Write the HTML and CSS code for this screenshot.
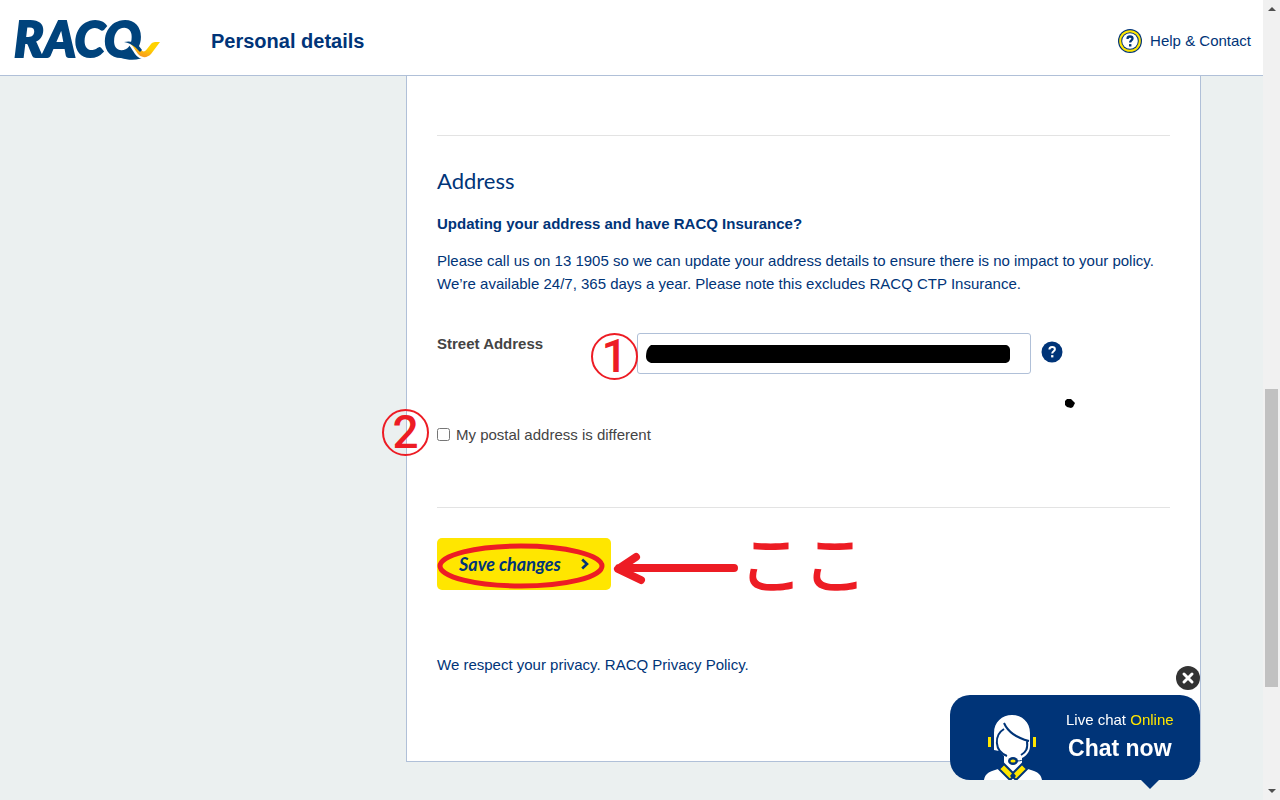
FILE: index.html
```html
<!DOCTYPE html>
<html lang="en">
<head>
    <meta charset="UTF-8">
    <meta name="viewport" content="width=device-width, initial-scale=1.0">
    <title>Personal details</title>
    <link rel="stylesheet" href="styles.css">
</head>
<body>
    <div class="page">
        <header class="header">
            <a href="#" class="logo" aria-label="RACQ">
                <svg width="149" height="42" viewBox="0 0 149 42">
                    <defs>
                        <linearGradient id="tick" x1="0.2" y1="1" x2="0.9" y2="0">
                            <stop offset="0.2" stop-color="#f9a11b"/>
                            <stop offset="0.6" stop-color="#ffd200"/>
                        </linearGradient>
                    </defs>
                    <text x="2" y="37" class="logo-text">RACQ</text>
                    <path d="M119 32h30v16h-45v-9h13z" fill="#fff"/>
                    <path d="M107 31c8 2 14-1 17-5l10 10c-5 4-16 5-25 2z" fill="#00437c"/>
                    <path d="M114 22c7-1 11 3 15 8 3 3 5 2 7-1l5-7h8l-10 14c-4 4-9 4-13 1-5-4-6-10-12-15z" fill="#fff"/>
                    <path d="M116 22c6 0 9 4 13 8 2 2 4 2 6-1l4-5c2-2 3-2 9-2l-9 12c-4 4-8 4-12 1-4-4-5-9-11-13z" fill="url(#tick)"/>
                    <path d="M112 22c9-2 14 2 18 8l-2 2c-4-4-7-8-16-10z" fill="#00437c"/>
                </svg>
            </a>
            <h1>Personal details</h1>
            <a href="#" class="help-link">
                <svg width="24" height="24" viewBox="0 0 24 24">
                    <circle cx="12" cy="12" r="12" fill="#003478"/>
                    <circle cx="12" cy="12" r="10.8" fill="#ffe600"/>
                    <circle cx="12" cy="12" r="8.8" fill="#003478"/>
                    <circle cx="12" cy="12" r="7.8" fill="#fff"/>
                    <path d="M9.6 10V9.6c0-1.4 1-2.1 2.4-2.1s2.5.8 2.5 2.1c0 2-2.4 1.7-2.4 4" fill="none" stroke="#003478" stroke-width="2.3"/>
                    <path d="M11 15.1h2.4v2.4H11z" fill="#003478"/>
                </svg>
                Help &amp; Contact
            </a>
        </header>

        <main class="main">
            <form class="card">
                <section class="address">
                    <h2>Address</h2>
                    <h3>Updating your address and have RACQ Insurance?</h3>
                    <p>Please call us on 13 1905 so we can update your address details to ensure there is no impact to your policy. We’re available 24/7, 365 days a year. Please note this excludes RACQ CTP Insurance.</p>

                    <div class="field">
                        <label for="street">Street Address</label>
                        <div class="input-wrap">
                            <input type="text" id="street">
                            <svg class="redacted" width="366" height="20" viewBox="0 0 366 20">
                                <path d="M5 1h354c3 0 5 2 5 5v8c0 3-2 5-6 5H5c-3-1-5-3-5-6 0-5 1-9 5-12z"/>
                            </svg>
                            <span class="mark mark-one">1</span>
                        </div>
                        <button type="button" class="tip" aria-label="Help">
                            <svg width="22" height="22" viewBox="0 0 22 22">
                                <circle cx="11" cy="11" r="10.5" fill="#003478"/>
                                <path d="M8.4 8.6c0-1.7 1-2.6 2.7-2.6s2.8.9 2.8 2.3c0 2.1-2.7 1.8-2.7 4.2" fill="none" stroke="#fff" stroke-width="2"/>
                                <path d="M10.1 14.1h2.3v2.3h-2.3z" fill="#fff"/>
                            </svg>
                        </button>
                        <svg class="ink-dot" width="10" height="9" viewBox="0 0 10 9"><path d="M2 0h4l2 2 2 2-1 2-1 2-2 1-4-1-2-2V2z"/></svg>
                    </div>

                    <div class="check">
                        <input type="checkbox" id="postal">
                        <label for="postal">My postal address is different</label>
                        <span class="mark mark-two">2</span>
                    </div>
                </section>

                <div class="actions">
                    <button type="submit" class="save">
                        Save changes
                        <svg width="8" height="12" viewBox="0 0 8 12"><path d="M1.2 1.5 6 6l-4.8 4.5" fill="none" stroke="#003478" stroke-width="2.6"/></svg>
                    </button>
                    <svg class="pointer" width="302" height="52" viewBox="0 0 302 52">
                        <ellipse cx="84" cy="28" rx="81" ry="20" fill="none" stroke="#ed1c24" stroke-width="5"/>
                        <path d="M297 30H182M199 19 181 31l23 11" fill="none" stroke="#ed1c24" stroke-width="8" stroke-linecap="round" stroke-linejoin="round"/>
                    </svg>
                    <span class="here" lang="ja">ここ</span>
                </div>

                <p class="privacy">We respect your privacy. <a href="#">RACQ Privacy Policy.</a></p>
            </form>
        </main>
    </div>

    <div class="scrollbar">
        <span class="arrow up"></span>
        <span class="thumb"></span>
        <span class="arrow down"></span>
    </div>

    <div class="chat">
        <button type="button" class="chat-close" aria-label="Close">
            <svg width="24" height="24" viewBox="0 0 24 24">
                <circle cx="12" cy="12" r="12" fill="#333"/>
                <path d="m8 8 8 8m0-8-8 8" stroke="#fff" stroke-width="3" stroke-linecap="round"/>
            </svg>
        </button>
        <a href="#" class="chat-box">
            <svg width="62" height="66" viewBox="0 0 62 66">
                <path d="M12 36V19C12 8 20 1 30 1s18 7 18 18v13c0 6-4 10-8 12v7l3 3 9 3c5 2 7 4 8 9H2c1-5 3-7 8-9l9-3 3-3v-9l-5-5z" fill="#fff"/>
                <path d="M22 9c4 9 13 15 25 18M22 15c-10 6-10 22 3 27M45 27c1 8-1 11-6 14" fill="none" stroke="#003478" stroke-width="2"/>
                <path d="M46 42c-2 4-7 5-12 5" fill="none" stroke="#003478" stroke-width="1"/>
                <ellipse cx="31" cy="47" rx="5" ry="4" fill="#003478"/>
                <ellipse cx="31" cy="47" rx="2.6" ry="1.6" fill="#ffe600"/>
                <path d="m17 55 5-5 9 9 9-9 5 5-11 11-3-3-3 3z" fill="#ffe600" stroke="#003478" stroke-width="2"/>
                <path d="m31 58-3 4 3 3 3-3z" fill="#003478"/>
                <path d="M6 23h3v10H6zM51 23h3v10h-3z" fill="#ffe600"/>
            </svg>
            <span class="chat-text">
                <span>Live chat <em>Online</em></span>
                <strong>Chat now</strong>
            </span>
        </a>
    </div>
</body>
</html>
```
FILE: styles.css
```css
* {
    box-sizing: border-box;
}

body {
    display: flex;
    height: 100vh;
    margin: 0;
    overflow: hidden;
    background-color: #ebf0f0;
    color: #003478;
    font-family: "Liberation Sans", Arial, sans-serif;
    font-size: 15px;
    line-height: 23px;
}

a {
    color: inherit;
    text-decoration: none;
}

button {
    padding: 0;
    border: none;
    background: none;
    cursor: pointer;
}

svg {
    display: block;
    flex: none;
}

.page {
    flex: 1;
    min-width: 0;
}

.header {
    display: flex;
    align-items: center;
    height: 76px;
    padding: 6px 12px 0 12px;
    background-color: #fff;
    border-bottom: 1px solid #b0c0d8;
}

.logo svg {
    overflow: visible;
}

.logo-text {
    font-family: Lato, sans-serif;
    font-size: 49px;
    font-weight: 900;
    font-style: italic;
    fill: #00437c;
    stroke: #00437c;
    stroke-width: 2px;
}

.header h1 {
    margin: 0 auto 0 50px;
    padding-top: 2px;
    font-size: 20px;
}

.help-link {
    display: flex;
    align-items: center;
    gap: 8px;
}

.main {
    padding: 0 62px 0 406px;
}

.card {
    padding: 59px 30px 85px;
    background-color: #fff;
    border: 1px solid #b0c0d8;
    border-top: none;
}

.address {
    padding: 29px 0 61px;
    border-top: 1px solid #e3e3e3;
    border-bottom: 1px solid #e3e3e3;
}

.address h2 {
    margin: 0 0 15px;
    font-family: Lato, sans-serif;
    font-size: 22px;
    font-weight: 400;
    line-height: 32px;
}

.address h3 {
    margin: 0 0 14px;
    font-size: 15px;
}

.address p {
    margin: 0;
}

.field {
    position: relative;
    display: flex;
    margin-top: 38px;
}

.field label {
    width: 200px;
    color: #444;
    font-weight: bold;
    line-height: 21px;
}

.input-wrap {
    position: relative;
    width: 394px;
}

.input-wrap input {
    display: block;
    width: 100%;
    height: 41px;
    padding: 0 10px;
    border: 1px solid #b0c0d8;
    border-radius: 3px;
    font: inherit;
}

.redacted {
    position: absolute;
    top: 11px;
    left: 9px;
}

.tip {
    align-self: flex-start;
    margin: 8px 0 0 10px;
}

.ink-dot {
    position: absolute;
    top: 66px;
    left: 628px;
}

.check {
    position: relative;
    display: flex;
    align-items: center;
    gap: 6px;
    margin-top: 49px;
    color: #444;
}

.check input {
    width: 13px;
    height: 13px;
    margin: 0;
}

.mark {
    position: absolute;
    width: 47px;
    height: 47px;
    border: 2px solid #ed1c24;
    border-radius: 50%;
    color: #ed1c24;
    font-family: Roboto, sans-serif;
    font-size: 46px;
    font-weight: 500;
    line-height: 43px;
    text-align: center;
}

.mark-one {
    top: 0;
    left: -46px;
}

.mark-two {
    top: -14px;
    left: -55px;
}

.actions {
    position: relative;
    margin-top: 30px;
}

.save {
    display: flex;
    align-items: center;
    justify-content: space-between;
    width: 174px;
    height: 52px;
    padding: 0 22px;
    background-color: #ffe600;
    border-radius: 5px;
    color: #003478;
    font-family: Lato, sans-serif;
    font-size: 18px;
    font-weight: bold;
    font-style: italic;
}

.pointer {
    position: absolute;
    top: 0;
    left: 0;
}

.here {
    position: absolute;
    top: -10px;
    left: 302px;
    color: #ed1c24;
    font-family: "Noto Sans CJK JP", sans-serif;
    font-size: 64px;
    font-weight: 500;
    line-height: 64px;
    white-space: nowrap;
}

.privacy {
    margin: 63px 0 0;
}

.scrollbar {
    display: flex;
    flex-direction: column;
    align-items: center;
    width: 17px;
    padding: 7px 0;
    background-color: #f1f1f1;
}

.arrow {
    border: 4px solid transparent;
}

.up {
    border-top: none;
    border-bottom-color: #505050;
}

.down {
    margin-top: auto;
    border-bottom: none;
    border-top-color: #505050;
}

.thumb {
    width: 13px;
    height: 298px;
    margin-top: 378px;
    background-color: #c1c1c1;
}

.chat {
    position: fixed;
    right: 80px;
    bottom: 20px;
    width: 250px;
}

.chat-close {
    display: block;
    margin: 0 0 5px auto;
}

.chat-box {
    position: relative;
    display: flex;
    align-items: flex-end;
    gap: 22px;
    height: 85px;
    padding-left: 32px;
    background-color: #003478;
    border-radius: 20px;
    color: #fff;
}

.chat-box::after {
    content: "";
    position: absolute;
    top: 100%;
    right: 41px;
    border: 9px solid transparent;
    border-top-color: #003478;
    border-bottom: none;
}

.chat-text {
    display: flex;
    flex-direction: column;
    align-items: center;
    gap: 6px;
    padding-bottom: 20px;
}

.chat-text em {
    color: #ffe600;
    font-style: normal;
}

.chat-text strong {
    font-size: 23px;
}
```
